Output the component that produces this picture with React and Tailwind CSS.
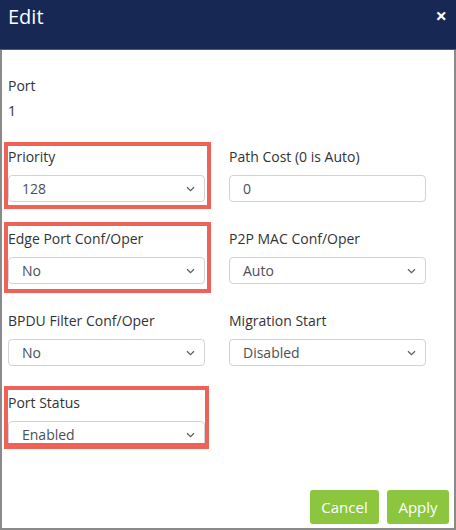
function Chevron() {
  return (
    <svg className="absolute right-[9px] top-1/2 -translate-y-1/2" width="9" height="6" viewBox="0 0 9 6">
      <path d="M1 1.2 L4.5 4.6 L8 1.2" fill="none" stroke="#5a5f66" strokeWidth="1.3" />
    </svg>
  );
}

function Select({ value }) {
  return (
    <div className="relative h-[27px] w-full rounded-[4px] border border-[#ced4da] bg-white pl-[13px] text-[14px] leading-[25px] text-[#495057]">
      {value}
      <Chevron />
    </div>
  );
}

function Input({ value }) {
  return (
    <div className="h-[27px] w-full rounded-[4px] border border-[#ced4da] bg-white pl-[13px] text-[14px] leading-[25px] text-[#495057]">
      {value}
    </div>
  );
}

function Field({ label, children, mark }) {
  return (
    <div className="relative">
      <div className="h-[20px] text-[14px] leading-[20px] text-[#333]">{label}</div>
      <div className="mt-[8px]">{children}</div>
      {mark}
    </div>
  );
}

// red highlight boxes drawn over the fields
const Mark = ({ className }) => (
  <div className={`pointer-events-none absolute left-[-4px] border-[4px] border-[#ef6257] ${className}`} />
);

export default function App() {
  return (
    <div
      className="flex h-[530px] w-[456px] flex-col border-x-2 border-b-2 border-[#8a8a8a] bg-white"
      style={{ fontFamily: '"Open Sans", "Noto Sans", sans-serif' }}
    >
      <div className="mx-[-2px] flex h-[50px] items-start justify-between border-b border-[#3d5a96] bg-[#172854] pl-[8px] pr-[9px] text-white">
        <div className="mt-[3px] text-[20px] leading-[28px]">Edit</div>
        <div className="mt-[4px] text-[20px] font-bold leading-[24px]">×</div>
      </div>

      <div className="flex-1 pl-[6px] pr-[28px] pt-[26px]">
        <div className="text-[14px] leading-[20px] text-[#333]">Port</div>
        <div className="mt-[5px] text-[14px] leading-[20px] text-[#333]">1</div>

        <div className="mt-[26px] grid grid-cols-2 gap-x-[24px] gap-y-[27px]">
          <Field label="Priority" mark={<Mark className="top-[-5px] h-[67px] w-[207px]" />}>
            <Select value="128" />
          </Field>
          <Field label="Path Cost (0 is Auto)">
            <Input value="0" />
          </Field>
          <Field label="Edge Port Conf/Oper" mark={<Mark className="top-[-7px] h-[71px] w-[207px]" />}>
            <Select value="No" />
          </Field>
          <Field label="P2P MAC Conf/Oper">
            <Select value="Auto" />
          </Field>
          <Field label="BPDU Filter Conf/Oper">
            <Select value="No" />
          </Field>
          <Field label="Migration Start">
            <Select value="Disabled" />
          </Field>
          <Field label="Port Status" mark={<Mark className="top-[-7px] h-[63px] w-[205px] border-b-[6px] bg-transparent" />}>
            <Select value="Enabled" />
          </Field>
        </div>
      </div>

      <div className="flex justify-end gap-[8px] pb-[4px] pr-[5px]">
        <button className="h-[34px] w-[69px] rounded-[3px] bg-[#8cc63e] text-[15px] text-white">Cancel</button>
        <button className="h-[34px] w-[62px] rounded-[3px] bg-[#8cc63e] text-[15px] text-white">Apply</button>
      </div>
    </div>
  );
}
